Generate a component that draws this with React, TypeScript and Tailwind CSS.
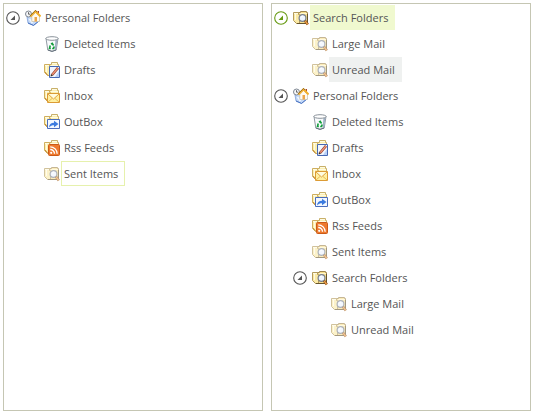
import React, { useState } from 'react';
import clsx from 'clsx';

type IconName = 'personal' | 'deleted' | 'drafts' | 'inbox' | 'outbox' | 'rss' | 'search';

interface TreeNode {
  id: string;
  label: string;
  icon: IconName;
  faded?: boolean;
  children?: TreeNode[];
}

const searchFolders: TreeNode[] = [
  { id: 'large', label: 'Large Mail', icon: 'search', faded: true },
  { id: 'unread', label: 'Unread Mail', icon: 'search', faded: true },
];

const mailFolders: TreeNode[] = [
  { id: 'deleted', label: 'Deleted Items', icon: 'deleted' },
  { id: 'drafts', label: 'Drafts', icon: 'drafts' },
  { id: 'inbox', label: 'Inbox', icon: 'inbox' },
  { id: 'outbox', label: 'OutBox', icon: 'outbox' },
  { id: 'rss', label: 'Rss Feeds', icon: 'rss' },
  { id: 'sent', label: 'Sent Items', icon: 'search', faded: true },
];

const leftTree: TreeNode[] = [
  { id: 'personal', label: 'Personal Folders', icon: 'personal', children: mailFolders },
];

const rightTree: TreeNode[] = [
  { id: 'search', label: 'Search Folders', icon: 'search', children: searchFolders },
  {
    id: 'personal',
    label: 'Personal Folders',
    icon: 'personal',
    children: [
      ...mailFolders,
      {
        id: 'nested-search',
        label: 'Search Folders',
        icon: 'search',
        children: searchFolders.map((n) => ({ ...n, id: `nested-${n.id}` })),
      },
    ],
  },
];

const Folder = () => (
  <>
    <path d="M3.5 12.5V2.5H7.5V.5H13.5V2.5H14.5V12.5Z" fill="#fbefb2" stroke="#c8b06a" />
    <path d="M8 1.5H13M7 3.5H14" stroke="#fffbe2" />
    <path d="M.5 2.5H5.5V4.5H6.5V13.5H3.5L.5 10.5Z" fill="#fcefae" stroke="#cfae5e" />
    <path d="M1 10L4 13.5" stroke="#c58a35" />
    <path d="M1 3.5H5M2.5 4V10" stroke="#fffbe2" />
  </>
);

const NodeIcon: React.FC<{ name: IconName; faded?: boolean }> = ({ name, faded }) => (
  <svg viewBox="0 0 16 16" className={clsx('mr-px size-4 shrink-0', faded && 'opacity-60')} aria-hidden="true">
    {name === 'personal' && (
      <>
        <path d="M2 7L6 5.5L14.5 10.5L8.5 15.5L3 13Z" fill="#c3d8f7" stroke="#7f9fd8" strokeWidth=".8" />
        <path d="M3 13L8.5 15.4L14 11" fill="none" stroke="#4b74c2" />
        <path d="M4.5 9L7.5 13" stroke="#f3f8ff" strokeWidth="1.5" />
        <circle cx="3.5" cy="4" r="3" fill="#f4f6f9" stroke="#727a86" strokeWidth=".9" />
        <path d="M3.5 2.2V4.2H5.2" fill="none" stroke="#444" strokeWidth=".8" />
        <path d="M12.5 1H14V5H12.5Z" fill="#a8482c" />
        <path d="M6.8 6.5L10.5 2.5L14.5 6.5V11.5H6.8Z" fill="#fffaf0" stroke="#c7c0aa" strokeWidth=".7" />
        <path d="M5.3 6.5L10.5 1.2L15.6 6.5" fill="none" stroke="#f3b02b" strokeWidth="2" />
        <path d="M5 6L10.5 .4L12 2" fill="none" stroke="#5f4a27" strokeWidth=".6" />
        <path d="M9.5 7H12V11.5H9.5Z" fill="#eda648" />
      </>
    )}
    {name === 'deleted' && (
      <>
        <path d="M2 2.5L3.8 14L8 15.3L12.2 14L14 2.5Z" fill="#f8fafc" stroke="#929ba4" />
        <path d="M11.5 4L10.5 14.3L12 13.8L13.5 3.5Z" fill="#9fb1c4" />
        <ellipse cx="8" cy="2.5" rx="6.2" ry="1.8" fill="#ffffff" stroke="#7d868f" strokeWidth=".9" />
        <path d="M3.8 14L8 15.4L12.2 14" fill="none" stroke="#65717d" />
        <path d="M7 8.2L8.2 7.4L9.5 9.5M10.2 10.5L9.5 12.5H8.2M6.8 12.5H5.5L6.2 9.5" fill="none" stroke="#109c3a" strokeWidth="1.6" />
      </>
    )}
    {name === 'drafts' && (
      <>
        <Folder />
        <path d="M5.5 4.5H15.5V15.5H5.5Z" fill="#f1f6ff" stroke="#4668b3" />
        <path d="M11 15H15V9Z" fill="#b9d0f6" />
        <path d="M8 13L14 5.8" stroke="#94402c" strokeWidth="2.6" />
        <path d="M8.3 12.6L13.8 6.1" stroke="#f4977b" strokeWidth="1.4" />
        <path d="M6.5 14.5L7 12L9 13.8Z" fill="#413424" />
      </>
    )}
    {name === 'inbox' && (
      <>
        <Folder />
        <path d="M3.5 5.5H15.5V14.5H3.5Z" fill="#fff0a0" stroke="#dc9b35" />
        <path d="M4 14L8 10.5M15 14L11 10.5" stroke="#e8bb57" />
        <path d="M4 6L9.5 11L15 6" fill="#fffcdf" stroke="#e0a440" />
      </>
    )}
    {name === 'outbox' && (
      <>
        <Folder />
        <path d="M3.5 5.5H15.5V14.5H3.5Z" fill="#f3f8ff" stroke="#4a6dbd" />
        <path d="M5 13.5C5 10.5 7 8.7 10 8.7V6.8L14.5 10L10 13.2V11.2C8 11.2 6.5 11.8 5 13.5Z" fill="#3c7be0" />
      </>
    )}
    {name === 'rss' && (
      <>
        <Folder />
        <rect x="4.5" y="4.5" width="11" height="11" rx="1" fill="#ee7a2e" stroke="#cb5a18" />
        <circle cx="7.2" cy="12.8" r="1.1" fill="#fff" />
        <path d="M6.2 9.5A4.2 4.2 0 0 1 10.5 13.8M6.2 6.8A7 7 0 0 1 13.2 13.8" fill="none" stroke="#fff" strokeWidth="1.3" />
      </>
    )}
    {name === 'search' && (
      <>
        <path d="M3.5 13.5V2.5H7.5V1.5H13.5V2.5H14.5V13.5Z" fill="#f7df8c" stroke="#a08750" />
        <path d="M7 3.5H14" stroke="#fff6cc" />
        <path d="M.5 2.5H5.5V4.5H6.5V13.5H3.5L.5 10.5Z" fill="#fbeaa6" stroke="#b39a5c" />
        <path d="M1 3.5H5M2.5 4V10" stroke="#fffbe0" />
        <path d="M14.5 4V13.5H4" fill="none" stroke="#67542b" />
        <circle cx="9.5" cy="8" r="3.4" fill="#eef5ff" stroke="#79808e" strokeWidth="1.2" />
        <path d="M8 7L10 6" stroke="#fff" />
        <path d="M12 10.7L14.8 14.6" stroke="#8d531d" strokeWidth="2.6" />
        <path d="M12.3 11.2L14.6 14.3" stroke="#f0a049" strokeWidth="1.4" />
      </>
    )}
  </svg>
);

interface TreeItemProps {
  node: TreeNode;
  selected?: string;
  hot?: string;
  focused?: string;
  onSelect: (id: string) => void;
}

const TreeItem: React.FC<TreeItemProps> = ({ node, selected, hot, focused, onSelect }) => {
  const [open, setOpen] = useState(true);
  const isSelected = selected === node.id;

  return (
    <li role="treeitem" aria-selected={isSelected} aria-expanded={node.children ? open : undefined}>
      <div className="mb-px flex h-[25px] items-center">
        {node.children ? (
          <button
            type="button"
            aria-label={`Toggle ${node.label}`}
            onClick={() => setOpen(!open)}
            className={clsx('w-[19px] shrink-0', isSelected ? 'text-[#679a12]' : 'text-[#555555]')}
          >
            <svg viewBox="0 0 14 14" className="size-3.5" aria-hidden="true">
              <circle cx="7" cy="7" r="6.3" fill="none" stroke="currentColor" strokeWidth="1.1" />
              <path d={open ? 'M9 4.5V9H4.5Z' : 'M5.5 4.5L9 7L5.5 9.5Z'} fill="currentColor" />
            </svg>
          </button>
        ) : (
          <span className="w-[19px] shrink-0" />
        )}
        <NodeIcon name={node.icon} faded={node.faded} />
        <button
          type="button"
          onClick={() => onSelect(node.id)}
          className={clsx(
            'h-full border pr-1.5 pl-0.5 whitespace-nowrap',
            isSelected && 'border-[#f0f9cf] bg-[#f0f9cf]',
            hot === node.id && 'border-[#eff1f0] bg-[#eff1f0]',
            focused === node.id && 'border-[#e6f1ad]',
            !isSelected && hot !== node.id && focused !== node.id && 'border-transparent',
          )}
        >
          {node.label}
        </button>
      </div>
      {node.children && open && (
        <ul role="group" className="pl-[19px]">
          {node.children.map((child) => (
            <TreeItem key={child.id} node={child} selected={selected} hot={hot} focused={focused} onSelect={onSelect} />
          ))}
        </ul>
      )}
    </li>
  );
};

interface TreePanelProps {
  label: string;
  nodes: TreeNode[];
  initial?: string;
  hot?: string;
  focused?: string;
}

const TreePanel: React.FC<TreePanelProps> = ({ label, nodes, initial, hot, focused }) => {
  const [selected, setSelected] = useState(initial);

  return (
    <ul role="tree" aria-label={label} className="min-w-0 flex-1 overflow-hidden border border-[#c5c6b3] bg-white py-px pl-0.5">
      {nodes.map((node) => (
        <TreeItem key={node.id} node={node} selected={selected} hot={hot} focused={focused} onSelect={setSelected} />
      ))}
    </ul>
  );
};

export default function App() {
  return (
    <main className="flex min-h-screen gap-2 bg-white p-[3px] font-['Open_Sans','Noto_Sans',sans-serif] text-[11px] leading-4 text-[#555555]">
      <TreePanel label="Folders" nodes={leftTree} focused="sent" />
      <TreePanel label="All folders" nodes={rightTree} initial="search" hot="unread" />
    </main>
  );
}
